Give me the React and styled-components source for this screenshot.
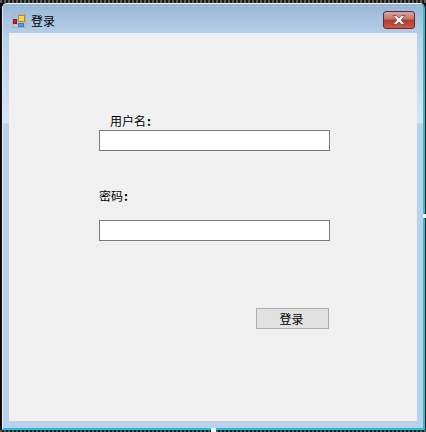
import React from "react";
import styled, { createGlobalStyle } from "styled-components";

const GlobalStyle = createGlobalStyle`
  html, body { margin: 0; padding: 0; background: #111; }
  body { font-family: "Noto Sans CJK SC", "Liberation Sans", sans-serif; }
`;

const Screen = styled.div`
  position: relative;
  width: 426px;
  height: 432px;
  overflow: hidden;
  display: flex;
  flex-direction: column;
  background: #0d0d0d;
`;

const Band = styled.div`
  flex: none;
  height: ${(p) => p.$h}px;
  background: repeating-linear-gradient(90deg, #5a5a5a 0 2px, #1a1a1a 2px 4px);
`;

const Win = styled.div`
  flex: none;
  width: 423px;
  height: 427px;
  margin-left: 2px;
  box-sizing: border-box;
  display: flex;
  flex-direction: column;
  padding: 0 6px 7px 6px;
  border-radius: 5px 5px 0 0;
  border-top: 1px solid #f2f6fb;
  border-left: 1px solid #e6edf5;
  border-bottom: 2px solid #19c3d8;
  border-right: 2px solid #19c3d8;
  background: linear-gradient(
    180deg,
    #9ab7d7 0,
    #b9d1ea 34px,
    #d6e5f4 119px,
    #b9d1ea 120px,
    #b9d1ea 100%
  );
`;

const TitleBar = styled.div`
  flex: none;
  height: 29px;
  box-sizing: border-box;
  display: flex;
  align-items: center;
  gap: 5px;
  padding: 4px 2px 0 3px;
`;

const Title = styled.span`
  font-size: 12px;
  line-height: 14px;
  color: #000;
`;

const CloseBtn = styled.button`
  margin-left: auto;
  margin-top: -2px;
  width: 32px;
  height: 18px;
  padding: 0;
  display: flex;
  align-items: center;
  justify-content: center;
  border: 1px solid #5c2a3c;
  border-radius: 3px;
  background: linear-gradient(180deg, #dca79f 0, #c9705f 45%, #b23a2c 50%, #c55c48 100%);
`;

const Client = styled.div`
  flex: 1;
  background: #f0f0f0;
  display: flex;
  flex-direction: column;
  padding: 79px 87px 0 90px;
`;

const Label = styled.label`
  display: block;
  height: 18px;
  font-size: 12px;
  line-height: 17px;
  color: #000;
  padding-left: ${(p) => p.$indent || 0}px;
  margin-top: ${(p) => p.$top || 0}px;
`;

const Colon = styled.span`
  padding-left: 1px;
  font-weight: 700;
`;

const Input = styled.input`
  display: block;
  box-sizing: border-box;
  width: 231px;
  height: 21px;
  margin-top: ${(p) => p.$top || 0}px;
  padding: 0 3px;
  background: #fff;
  border: 1px solid #7a7a7a;
  outline: none;
`;

const Actions = styled.div`
  margin-top: 67px;
  display: flex;
  justify-content: flex-end;
  padding-right: 1px;
`;

const Submit = styled.button`
  width: 73px;
  height: 21px;
  padding: 0 2px 0 0;
  font-family: inherit;
  font-size: 12px;
  line-height: 17px;
  color: #000;
  background: #e1e1e1;
  border: 1px solid #adadad;
`;

// little white resize handles that sit over the window edge
const Handle = styled.div`
  position: absolute;
  background: #fff;
  width: ${(p) => p.$w}px;
  height: ${(p) => p.$h}px;
  left: ${(p) => p.$x}px;
  top: ${(p) => p.$y}px;
`;

const AppIcon = () => (
  <svg width="14" height="14" viewBox="0 0 14 14">
    <rect x="0.5" y="0.5" width="13" height="13" fill="none" stroke="#a9b2bc" />
    <rect x="6.5" y="1.500" width="6" height="6" fill="#fdd654" stroke="#b88a1c" />
    <rect x="1.500" y="5.500" width="3" height="4" fill="#d3222c" stroke="#8a1a20" />
    <rect x="6.500" y="9.500" width="5" height="3" fill="#5c9cf0" stroke="#3f76c4" />
  </svg>
);

const CloseIcon = () => (
  <svg width="14" height="10" viewBox="0 0 14 10">
    <path
      d="M1 0.5h3.5L7 3l2.5-2.500H13L9.200 5 13 9.500H9.500L7 7 4.500 9.500H1L4.800 5z"
      fill="#eef0f6"
      stroke="#6b3a46"
      strokeWidth="0.7"
    />
  </svg>
);

export default function App() {
  return (
    <>
      <GlobalStyle />
      <Screen>
        <Band $h={3} />
        <Win>
          <TitleBar>
            <AppIcon />
            <Title>登录</Title>
            <CloseBtn aria-label="关闭">
              <CloseIcon />
            </CloseBtn>
          </TitleBar>
          <Client>
            <Label $indent={11}>用户名<Colon>:</Colon></Label>
            <Input />
            <Label $top={36}>密码<Colon>:</Colon></Label>
            <Input $top={15} type="password" />
            <Actions>
              <Submit>登录</Submit>
            </Actions>
          </Client>
        </Win>
        <Band $h={2} />
        <Handle $x={211} $y={428} $w={5} $h={4} />
        <Handle $x={423} $y={214} $w={3} $h={4} />
      </Screen>
    </>
  );
}
